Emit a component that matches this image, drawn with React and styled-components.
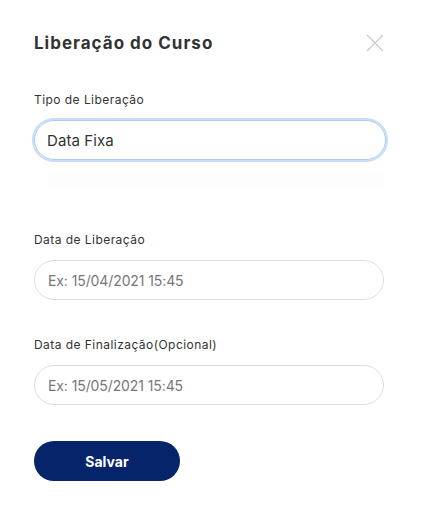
import styled, { createGlobalStyle } from "styled-components";

const GlobalStyle = createGlobalStyle`
  body {
    margin: 0;
    background: #ffffff;
    font-family: "Inter", "Noto Sans", sans-serif;
  }
`;

export default function App() {
  return (
    <>
      <GlobalStyle />
      <Modal>
        <Header>
          <Title>Liberação do Curso</Title>
          <Close aria-label="Fechar">
            <svg width="18" height="18" viewBox="0 0 18 18">
              <path d="M1 1L17 17M17 1L1 17" stroke="#cccccc" strokeWidth="1.3" />
            </svg>
          </Close>
        </Header>
        <Field>
          <Label>Tipo de Liberação</Label>
          <Select>Data Fixa</Select>
          <Ghost />
        </Field>
        <Field $gap={45}>
          <Label>Data de Liberação</Label>
          <Input placeholder="Ex: 15/04/2021 15:45" />
        </Field>
        <Field $gap={37}>
          <Label>Data de Finalização(Opcional)</Label>
          <Input placeholder="Ex: 15/05/2021 15:45" />
        </Field>
        <Button>Salvar</Button>
      </Modal>
    </>
  );
}

const Modal = styled.div`
  width: 422px;
  height: 509px;
  box-sizing: border-box;
  padding: 33px 38px 0 34px;
  display: flex;
  flex-direction: column;
`;

const Header = styled.div`
  display: flex;
  justify-content: space-between;
  align-items: center;
  height: 20px;
  margin-bottom: 39px;
`;

const Title = styled.h1`
  margin: 0;
  font-size: 17px;
  line-height: 20px;
  font-weight: 700;
  color: #333333;
  letter-spacing: 1px;
`;

const Close = styled.button`
  background: none;
  border: none;
  padding: 0;
  width: 18px;
  height: 18px;
  display: flex;
`;

const Field = styled.div`
  display: flex;
  flex-direction: column;
  gap: 13px;
  margin-top: ${(p) => p.$gap || 0}px;
`;

const Label = styled.label`
  font-size: 12px;
  line-height: 15px;
  color: #333333;
  letter-spacing: 0.45px;
`;

const Select = styled.div`
  height: 40px;
  margin-right: -2px;
  box-sizing: border-box;
  border-radius: 20px;
  border: 1px solid #a9cbf2;
  box-shadow: 0 0 0 2px #c7ddf8;
  padding: 0 12px;
  display: flex;
  align-items: center;
  font-size: 15px;
  color: #333333;
  letter-spacing: 0.1px;
`;

const Ghost = styled.div`
  height: 16px;
  margin: -2px 0 0 14px;
  background: #fdfdfd;
`;

const Input = styled.input`
  height: 40px;
  box-sizing: border-box;
  border-radius: 20px;
  border: 1px solid #dddddd;
  padding: 0 13px;
  font-family: inherit;
  font-size: 14px;
  color: #333333;
  letter-spacing: -0.1px;
  outline: none;
  &::placeholder {
    color: #777777;
  }
`;

const Button = styled.button`
  margin-top: 36px;
  width: 146px;
  height: 40px;
  border: none;
  border-radius: 20px;
  background: #06246a;
  color: #ffffff;
  font-family: inherit;
  font-size: 14px;
  font-weight: 700;
`;
